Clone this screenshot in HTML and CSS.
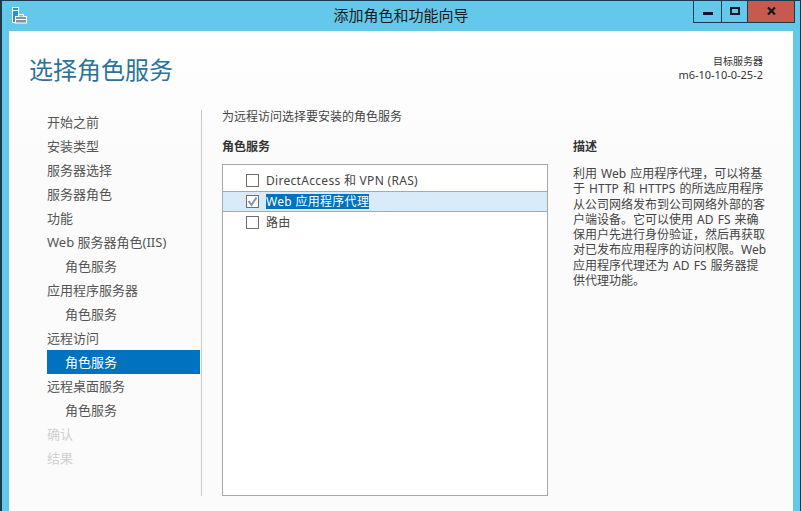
FILE: index.html
```html
<!DOCTYPE html>
<html lang="zh-CN">
<head>
    <meta charset="UTF-8">
    <title>添加角色和功能向导</title>
    <link rel="stylesheet" href="styles.css">
</head>
<body>
    <div class="window">
        <div class="titlebar">
            <svg class="app-icon" width="18" height="18" viewBox="0 0 18 18">
                <rect x="1.500" y="0.500" width="6" height="15" fill="#2f8fd6" stroke="#fff"/>
                <rect x="2" y="3" width="5" height="1" fill="#fff"/>
                <rect x="4.500" y="9.500" width="11" height="6.500" fill="#84949e" stroke="#fff"/>
                <path d="M7.500 9.500v-2h5v2" fill="#63c8ea" stroke="#fff"/>
                <rect x="5" y="12" width="10" height="1" fill="#fff"/>
            </svg>
            <div class="title">添加角色和功能向导</div>
            <div class="controls">
                <div class="ctl ctl-min"><span class="min-bar"></span></div>
                <div class="ctl ctl-max"><span class="max-box"></span></div>
                <div class="ctl ctl-close">
                    <svg width="9" height="8" viewBox="0 0 9 8"><path d="M1 0.500l7 7M8 0.500l-7 7" stroke="#101820" stroke-width="2.200" fill="none"/></svg>
                </div>
            </div>
        </div>
        <div class="client">
            <div class="header">
                <h1>选择角色服务</h1>
                <div class="target">
                    <div>目标服务器</div>
                    <div class="target-name">m6-10-10-0-25-2</div>
                </div>
            </div>
            <div class="main">
                <ul class="nav">
                    <li>开始之前</li>
                    <li>安装类型</li>
                    <li>服务器选择</li>
                    <li>服务器角色</li>
                    <li>功能</li>
                    <li>Web 服务器角色(IIS)</li>
                    <li class="sub">角色服务</li>
                    <li>应用程序服务器</li>
                    <li class="sub">角色服务</li>
                    <li>远程访问</li>
                    <li class="sub active">角色服务</li>
                    <li>远程桌面服务</li>
                    <li class="sub">角色服务</li>
                    <li class="off">确认</li>
                    <li class="off">结果</li>
                </ul>
                <div class="content">
                    <p class="intro">为远程访问选择要安装的角色服务</p>
                    <div class="columns">
                        <div class="services">
                            <h2>角色服务</h2>
                            <div class="listbox">
                                <div class="row"><span class="check"></span><span>DirectAccess 和 VPN (RAS)</span></div>
                                <div class="row row-selected">
                                    <span class="check">
                                        <svg width="11" height="11" viewBox="0 0 11 11"><path d="M1.500 5l3 4 5-7.500" stroke="#7f98aa" stroke-width="2" fill="none"/></svg>
                                    </span>
                                    <span class="highlight">Web 应用程序代理</span>
                                </div>
                                <div class="row"><span class="check"></span><span>路由</span></div>
                            </div>
                        </div>
                        <div class="desc">
                            <h2>描述</h2>
                            <p>利用 Web 应用程序代理，可以将基<br>于 HTTP 和 HTTPS 的所选应用程序<br>从公司网络发布到公司网络外部的客<br>户端设备。它可以使用 AD FS 来确<br>保用户先进行身份验证，然后再获取<br>对已发布应用程序的访问权限。Web<br>应用程序代理还为 AD FS 服务器提<br>供代理功能。</p>
                        </div>
                    </div>
                </div>
            </div>
        </div>
    </div>
</body>
</html>
```
FILE: styles.css
```css
html, body {
    margin: 0;
    padding: 0;
}

body {
    width: 801px;
    height: 511px;
    overflow: hidden;
    font-family: "Noto Sans", "Noto Sans CJK SC", sans-serif;
    font-size: 12px;
    color: #444;
}

.window {
    box-sizing: border-box;
    width: 801px;
    height: 511px;
    display: flex;
    flex-direction: column;
    background-color: #63c8ea;
    border-top: 1px solid #1c3a4c;
    border-left: 2px solid #1c3a4c;
    border-right: 1px solid #1c3a4c;
}

.titlebar {
    height: 30px;
    flex-shrink: 0;
    display: flex;
    position: relative;
    justify-content: center;
    align-items: center;
}

.app-icon {
    position: absolute;
    left: 9px;
    top: 6px;
}

.title {
    font-size: 15px;
    color: #1a1a1a;
    margin-top: -3px;
}

.controls {
    position: absolute;
    right: 5px;
    top: 0;
    display: flex;
    height: 21px;
    border: 1px solid #1c3a4c;
    border-top: none;
}

.ctl {
    height: 21px;
    display: flex;
    align-items: center;
    justify-content: center;
}

.ctl-min {
    width: 27px;
    border-right: 1px solid #1c3a4c;
}

.ctl-max {
    width: 25px;
    border-right: 1px solid #1c3a4c;
}

.ctl-close {
    width: 46px;
    background-color: #c75a50;
}

.min-bar {
    width: 10px;
    height: 3px;
    background-color: #101820;
    margin-top: 4px;
}

.max-box {
    box-sizing: border-box;
    width: 10px;
    height: 8px;
    border: 2px solid #101820;
    margin-top: -1px;
}

.ctl-close svg {
    margin-top: -1px;
}

.client {
    flex: 1;
    margin: 0 7px;
    background: linear-gradient(#fff, #fbfbfb 120px);
    display: flex;
    flex-direction: column;
}

.header {
    height: 79px;
    flex-shrink: 0;
    display: flex;
    justify-content: space-between;
    box-sizing: border-box;
    padding: 21px 30px 0 20px;
}

h1 {
    margin: 0;
    font-size: 24px;
    font-weight: normal;
    line-height: 36px;
    color: #2b7398;
}

.target {
    text-align: right;
    font-size: 10px;
    line-height: 14px;
    margin-top: 2px;
    color: #333;
}

.target-name {
    font-size: 11px;
}

.main {
    display: flex;
    height: 386px;
}

.nav {
    list-style: none;
    margin: 0;
    padding: 0 1px 0 38px;
    width: 153px;
    border-right: 1px solid #c8c8c8;
    font-size: 13px;
    color: #555;
}

.nav li {
    height: 24px;
    line-height: 24px;
}

.nav .sub {
    padding-left: 18px;
}

.nav .active {
    background-color: #0072c0;
    color: #fff;
}

.nav .off {
    color: #d0d0d0;
}

.content {
    flex: 1;
    padding-left: 20px;
    padding-right: 22px;
}

.intro {
    margin: 0;
    line-height: 14px;
    color: #444;
}

.columns {
    display: flex;
    margin-top: 8px;
}

.services {
    width: 326px;
    flex-shrink: 0;
}

h2 {
    margin: 8px 0 0 0;
    font-size: 12px;
    line-height: 14px;
    font-weight: bold;
    color: #333;
}

.listbox {
    box-sizing: border-box;
    margin-top: 10px;
    height: 332px;
    background-color: #fff;
    border: 1px solid #a8a8a8;
    padding-top: 5px;
}

.row {
    height: 21px;
    box-sizing: border-box;
    display: flex;
    align-items: center;
    gap: 7px;
    padding-left: 23px;
    line-height: 15px;
    color: #444;
    letter-spacing: 0.3px;
}

.row-selected {
    background-color: #d9ebf9;
    border: 1px solid #7db4de;
    border-left: none;
    border-right: none;
}

.check {
    box-sizing: border-box;
    width: 13px;
    height: 13px;
    border: 1px solid #6e6e6e;
    background-color: #fff;
    display: flex;
    align-items: center;
    justify-content: center;
    flex-shrink: 0;
}

.highlight {
    background-color: #0072c0;
    color: #fff;
}

.desc {
    margin-left: 25px;
    flex: 1;
}

.desc p {
    margin: 12px 0 0 0;
    line-height: 15.300px;
    color: #444;
    white-space: nowrap;
    word-spacing: 1px;
}
```
